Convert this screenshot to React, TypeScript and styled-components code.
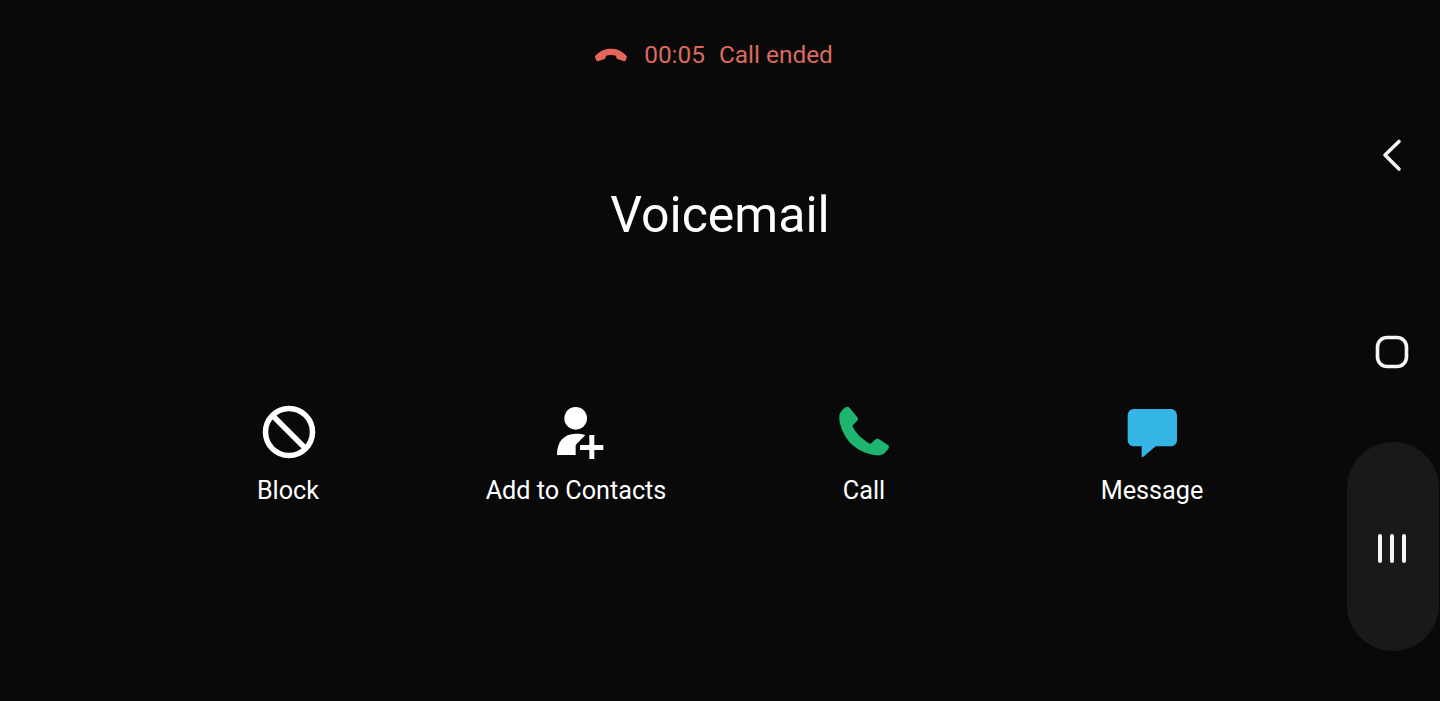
import React from "react";
import styled, { createGlobalStyle } from "styled-components";

const Global = createGlobalStyle`
  html, body { margin: 0; padding: 0; background: #090909; }
  body { font-family: Roboto, "Liberation Sans", sans-serif; }
`;

const Screen = styled.div`
  display: grid;
  grid-template-columns: 144px 1152px 144px;
  width: 1440px;
  height: 701px;
  overflow: hidden;
  background: #090909;
  color: #fff;
`;

const Main = styled.main`
  grid-column: 2;
  display: flex;
  flex-direction: column;
  align-items: center;
  padding-top: 41px;
`;

const Status = styled.div`
  display: flex;
  align-items: center;
  height: 28px;
  margin-right: 12px;
  font-size: 24.4px;
  line-height: 28px;
  color: #dd695e;
`;

const Duration = styled.span`
  margin-left: 17px;
`;

const StatusText = styled.span`
  margin-left: 14px;
`;

const Name = styled.h1`
  margin: 116px 0 0;
  font-size: 50px;
  line-height: 60px;
  font-weight: 400;
  color: #fff;
`;

const Actions = styled.div`
  display: grid;
  grid-template-columns: repeat(4, 288px);
  margin-top: 157px;
`;

const Action = styled.div`
  display: flex;
  flex-direction: column;
  align-items: center;
`;

const IconBox = styled.div`
  display: flex;
  align-items: center;
  justify-content: center;
  width: 60px;
  height: 60px;
`;

const Label = styled.span`
  margin-top: 14px;
  font-size: 25.2px;
  line-height: 30px;
  color: #fff;
`;

const Rail = styled.nav`
  grid-column: 3;
  display: flex;
  flex-direction: column;
  align-items: flex-end;
  padding: 137px 1px 0 0;
`;

const RailButton = styled.div<{ $top: number }>`
  display: flex;
  align-items: center;
  justify-content: center;
  width: 92px;
  margin-top: ${(p) => p.$top}px;
  margin-right: 1px;
`;

const RecentsPill = styled.div`
  display: flex;
  align-items: center;
  justify-content: center;
  width: 92px;
  height: 209px;
  margin-top: 73px;
  border-radius: 46px;
  background: #191919;
`;

const RecentsIcon = styled.div`
  display: flex;
  gap: 8px;
  margin: 4px 2px 0 0;
`;

const RecentsBar = styled.span`
  width: 4px;
  height: 29px;
  border-radius: 2px;
  background: #f4f4f4;
`;

const HangUpIcon = () => (
  <svg width="32" height="14" viewBox="45 53 96 42">
    <path
      fill="#e5655b"
      d="M46 76C60 60 78 55 93 55C108 55 126 60 139 76C141 79 141 81 140 84L137 90C136 93 133 93 130 92L114 87C111 86 109 84 109 81L108 76C98 73 88 73 78 76L77 81C77 84 75 86 72 87L56 92C53 93 50 93 49 90L46 84C45 81 44 79 46 76Z"
    />
  </svg>
);

const BlockIcon = () => (
  <svg width="56" height="54" viewBox="-2 0 56 54">
    <circle cx="27" cy="27" r="23.5" fill="none" stroke="#fff" strokeWidth="5.5" />
    <line x1="10.5" y1="10.5" x2="43.5" y2="43.5" stroke="#fff" strokeWidth="5.5" />
  </svg>
);

const AddContactIcon = () => (
  <svg width="60" height="60" viewBox="48 21 180 180">
    <circle cx="137" cy="70" r="34" fill="#fff" />
    <path fill="#fff" d="M81 180C81 140 100 117 138 116C148 116 158 117 166 120L137 150V180Z" />
    <rect x="150" y="150" width="70" height="15" fill="#fff" />
    <rect x="178" y="120" width="15" height="72" fill="#fff" />
  </svg>
);

const PhoneIcon = () => (
  <svg width="60" height="60" viewBox="27 21 180 180">
    <path
      fill="#1db56f"
      d="M43 62C45 50 56 40 64 36C68 34 71 35 74 39L97 67C100 71 99 74 97 77L85 89C83 91 82 93 84 97C92 114 110 131 132 145C136 147 138 146 140 144L150 134C153 131 157 130 161 132L189 150C193 153 193 157 190 161L180 173C174 179 165 182 155 181C123 177 90 162 70 137C55 117 41 87 43 62Z"
    />
  </svg>
);

const MessageIcon = () => (
  <svg width="60" height="60" viewBox="21 21 180 180">
    <path
      fill="#35b4e6"
      d="M58 42H166C178 42 186 50 186 62V134C186 146 178 154 166 154H122L84 186C82 188 80 187 80 184V154H58C46 154 38 146 38 134V62C38 50 46 42 58 42Z"
    />
  </svg>
);

const BackIcon = () => (
  <svg width="24" height="36" viewBox="0 0 24 36">
    <path d="M19 4.500 5 18l14 14" fill="none" stroke="#f6f6f6" strokeWidth="3.6" strokeLinecap="round" strokeLinejoin="round" />
  </svg>
);

const HomeIcon = () => (
  <svg width="34" height="34" viewBox="0 0 34 34">
    <rect x="2.5" y="2.5" width="29" height="29" rx="9.5" fill="none" stroke="#f6f6f6" strokeWidth="3.6" />
  </svg>
);

const actions = [
  { label: "Block", icon: <BlockIcon /> },
  { label: "Add to Contacts", icon: <AddContactIcon /> },
  { label: "Call", icon: <PhoneIcon /> },
  { label: "Message", icon: <MessageIcon /> },
];

export default function App() {
  return (
    <Screen>
      <Global />
      <Main>
        <Status>
          <HangUpIcon />
          <Duration>00:05</Duration>
          <StatusText>Call ended</StatusText>
        </Status>
        <Name>Voicemail</Name>
        <Actions>
          {actions.map((a) => (
            <Action key={a.label}>
              <IconBox>{a.icon}</IconBox>
              <Label>{a.label}</Label>
            </Action>
          ))}
        </Actions>
      </Main>
      <Rail>
        <RailButton $top={0}>
          <BackIcon />
        </RailButton>
        <RailButton $top={162}>
          <HomeIcon />
        </RailButton>
        <RecentsPill>
          <RecentsIcon>
            <RecentsBar />
            <RecentsBar />
            <RecentsBar />
          </RecentsIcon>
        </RecentsPill>
      </Rail>
    </Screen>
  );
}
